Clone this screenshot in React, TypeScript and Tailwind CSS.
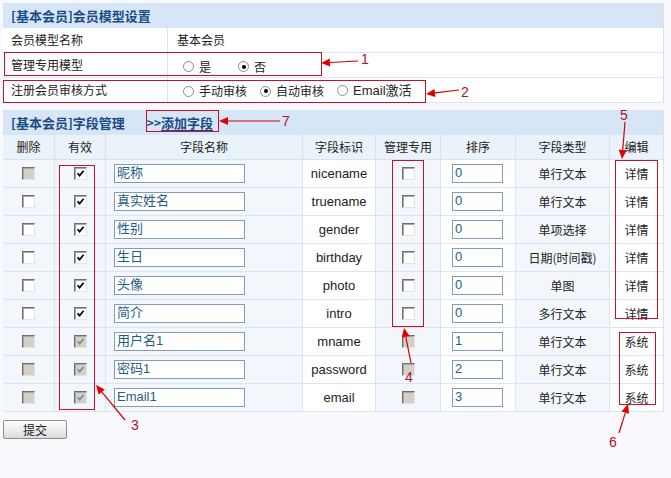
import React from 'react';

type Field = {
  name: string;
  key: string;
  sort: string;
  type: string;
  edit: string;
  locked: boolean;
};

const fields: Field[] = [
  { name: '昵称', key: 'nicename', sort: '0', type: '单行文本', edit: '详情', locked: false },
  { name: '真实姓名', key: 'truename', sort: '0', type: '单行文本', edit: '详情', locked: false },
  { name: '性别', key: 'gender', sort: '0', type: '单项选择', edit: '详情', locked: false },
  { name: '生日', key: 'birthday', sort: '0', type: '日期(时间戳)', edit: '详情', locked: false },
  { name: '头像', key: 'photo', sort: '0', type: '单图', edit: '详情', locked: false },
  { name: '简介', key: 'intro', sort: '0', type: '多行文本', edit: '详情', locked: false },
  { name: '用户名1', key: 'mname', sort: '1', type: '单行文本', edit: '系统', locked: true },
  { name: '密码1', key: 'password', sort: '2', type: '单行文本', edit: '系统', locked: true },
  { name: 'Email1', key: 'email', sort: '3', type: '单行文本', edit: '系统', locked: true },
];

const cjk = "font-['Noto_Sans_CJK_SC','Liberation_Sans',sans-serif]";

function CheckBox({ checked, disabled }: { checked?: boolean; disabled?: boolean }) {
  return (
    <span
      className={`inline-flex items-center justify-center w-[13px] h-[13px] border border-t-[#6f6f6f] border-l-[#6f6f6f] border-b-[#e4e4e4] border-r-[#e4e4e4] shadow-[inset_1px_1px_0_#a8a8a8] ${
        disabled ? 'bg-[#d4d0c8]' : 'bg-white'
      }`}
    >
      {checked && (
        <svg width="9" height="9" viewBox="0 0 9 9">
          <path
            d="M1.5 4.2 L3.6 6.6 L7.6 1.8"
            fill="none"
            stroke={disabled ? '#8a8a8a' : '#000'}
            strokeWidth="1.7"
          />
        </svg>
      )}
    </span>
  );
}

function Radio({ checked, label }: { checked?: boolean; label: string }) {
  return (
    <span className="inline-flex items-center gap-[5px]">
      <span className="inline-flex items-center justify-center w-[11px] h-[11px] rounded-full border border-[#8d8d8d] bg-white">
        {checked && <span className="w-[4px] h-[4px] rounded-full bg-black" />}
      </span>
      <span>{label}</span>
    </span>
  );
}

// red arrow: line from tail to tip, with a filled head at the tip
function Arrow({ x1, y1, x2, y2 }: { x1: number; y1: number; x2: number; y2: number }) {
  const a = Math.atan2(y2 - y1, x2 - x1);
  const len = 9;
  const w = 4;
  const bx = x2 - Math.cos(a) * len;
  const by = y2 - Math.sin(a) * len;
  const px = -Math.sin(a) * w;
  const py = Math.cos(a) * w;
  return (
    <g>
      <line x1={x1} y1={y1} x2={bx} y2={by} stroke="#d40000" strokeWidth="1.2" />
      <polygon points={`${x2},${y2} ${bx + px},${by + py} ${bx - px},${by - py}`} fill="#e00000" />
    </g>
  );
}

function Mark({ x, y, w, h }: { x: number; y: number; w: number; h: number }) {
  return (
    <div
      className="absolute border border-[#c8102e] pointer-events-none"
      style={{ left: x, top: y, width: w, height: h }}
    />
  );
}

function Num({ x, y, n }: { x: number; y: number; n: string }) {
  return (
    <span
      className="absolute text-[14px] leading-none text-[#b0102a] font-['Liberation_Sans',sans-serif]"
      style={{ left: x, top: y }}
    >
      {n}
    </span>
  );
}

const colW = 'grid-cols-[52px_51px_197px_73px_65px_75px_94px_53px]';

export default function App() {
  return (
    <div className={`relative w-[671px] h-[478px] bg-[#f9f9fd] pt-[3px] pl-[3px] text-[12px] text-[#222] ${cjk}`}>
      {/* 会员模型设置 */}
      <div className="w-[661px] border-r border-[#d4e3f0] bg-white">
        <div className="h-[25px] flex items-center pl-[8px] bg-[#d6e6f6] text-[13px] font-bold text-[#1a4a86]">
          [基本会员]会员模型设置
        </div>
        <div className="grid grid-cols-[165px_1fr] h-[25px] border-b border-[#d9e6f1]">
          <div className="flex items-center pl-[8px] border-r border-[#d9e6f1]">会员模型名称</div>
          <div className="flex items-center pl-[9px]">基本会员</div>
        </div>
        <div className="grid grid-cols-[165px_1fr] h-[25px] border-b border-[#d9e6f1]">
          <div className="flex items-center pl-[8px] border-r border-[#d9e6f1]">管理专用模型</div>
          <div className="flex items-center pl-[15px] gap-[27px] pt-[3px]">
            <Radio label="是" />
            <Radio label="否" checked />
          </div>
        </div>
        <div className="grid grid-cols-[165px_1fr] h-[25px] border-b border-[#d9e6f1]">
          <div className="flex items-center pl-[8px] border-r border-[#d9e6f1]">注册会员审核方式</div>
          <div className="flex items-center pl-[15px] gap-[13px] pt-[2px]">
            <Radio label="手动审核" />
            <Radio label="自动审核" checked />
            <span className="font-['Liberation_Sans','Noto_Sans_CJK_SC',sans-serif] text-[13px]">
              <Radio label="Email激活" />
            </span>
          </div>
        </div>
      </div>

      {/* 字段管理 */}
      <div className="mt-[7px] w-[661px] border-r border-[#d4e3f0]">
        <div className="h-[25px] flex items-center pl-[8px] bg-[#d6e6f6] text-[13px] font-bold text-[#1a4a86]">
          <span>[基本会员]字段管理</span>
          <span className="ml-[22px] text-[12px]">&gt;&gt;</span>
          <span className="underline underline-offset-2">添加字段</span>
        </div>
        <div className={`grid ${colW} h-[25px] bg-[#eaf2fa] border-b border-[#d4e3f0] text-center`}>
          {['删除', '有效', '字段名称', '字段标识', '管理专用', '排序', '字段类型', '编辑'].map((h) => (
            <div key={h} className="flex items-center justify-center border-r border-[#d4e3f0] last:border-r-0">
              {h}
            </div>
          ))}
        </div>
        {fields.map((f, i) => (
          <div key={f.key} className={`grid ${colW} h-[28px] border-b border-[#d9e6f1] text-center`}>
            <div className="flex items-center justify-center bg-[#f3f7fb] border-r border-[#d9e6f1]">
              <CheckBox disabled={f.locked || i === 0} />
            </div>
            <div className="flex items-center justify-center bg-[#f3f7fb] border-r border-[#d9e6f1]">
              <CheckBox checked disabled={f.locked} />
            </div>
            <div className="flex items-center pl-[8px] bg-[#f3f7fb] border-r border-[#d9e6f1]">
              <div className="w-[131px] h-[19px] border border-[#7f9db9] bg-white text-left pl-[2px] text-[13px] leading-[15px] text-[#1e5d86] font-['Liberation_Sans','Noto_Sans_CJK_SC',sans-serif]">
                {f.name}
              </div>
            </div>
            <div className="flex items-center justify-center bg-white border-r border-[#d9e6f1] text-[13px] font-['Liberation_Sans',sans-serif]">
              {f.key}
            </div>
            <div className="flex items-center justify-center bg-[#f3f7fb] border-r border-[#d9e6f1]">
              <CheckBox disabled={f.locked} />
            </div>
            <div className="flex items-center pl-[11px] bg-white border-r border-[#d9e6f1]">
              <div className="w-[51px] h-[19px] border border-[#7f9db9] bg-white text-left pl-[2px] text-[13px] leading-[16px] text-[#1e5d86] font-['Liberation_Sans',sans-serif]">
                {f.sort}
              </div>
            </div>
            <div className="flex items-center justify-center bg-[#f3f7fb] border-r border-[#d9e6f1]">{f.type}</div>
            <div className="flex items-center justify-center bg-white">{f.edit}</div>
          </div>
        ))}
      </div>

      <button className="mt-[8px] w-[64px] h-[19px] border border-[#8e8e8e] rounded-[2px] bg-gradient-to-b from-white to-[#dcdcdc] text-[12px] leading-none flex items-center justify-center">
        提交
      </button>

      {/* 标注 */}
      <Mark x={4} y={52} w={318} h={24} />
      <Mark x={3} y={80} w={423} h={23} />
      <Mark x={146} y={110} w={73} h={22} />
      <Mark x={615} y={160} w={43} h={159} />
      <Mark x={619} y={332} w={37} h={73} />
      <Mark x={59} y={165} w={36} h={245} />
      <Mark x={392} y={160} w={32} h={167} />

      <svg className="absolute left-0 top-0 pointer-events-none" width="671" height="478">
        <Arrow x1={358} y1={61} x2={321} y2={63} />
        <Arrow x1={459} y1={90} x2={426} y2={94} />
        <Arrow x1={280} y1={121} x2={219} y2={121} />
        <Arrow x1={625} y1={122} x2={622} y2={159} />
        <Arrow x1={619} y1={433} x2={628} y2={404} />
        <Arrow x1={125} y1={420} x2={96} y2={385} />
        <Arrow x1={411} y1={363} x2={404} y2={328} />
      </svg>

      <Num x={361} y={52} n="1" />
      <Num x={461} y={85} n="2" />
      <Num x={282} y={114} n="7" />
      <Num x={620} y={108} n="5" />
      <Num x={609} y={435} n="6" />
      <Num x={131} y={418} n="3" />
      <Num x={405} y={370} n="4" />
    </div>
  );
}
